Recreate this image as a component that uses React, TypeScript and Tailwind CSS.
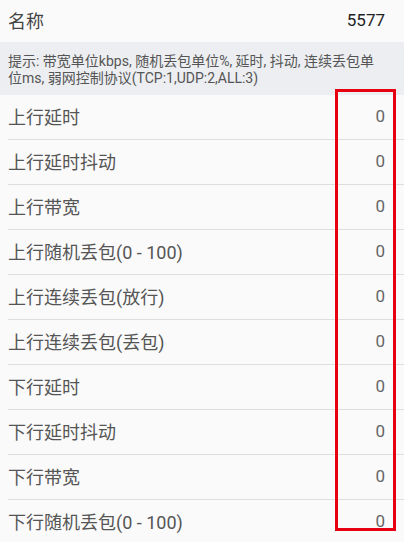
const rows: { label: string; value: string }[] = [
  { label: "上行延时", value: "0" },
  { label: "上行延时抖动", value: "0" },
  { label: "上行带宽", value: "0" },
  { label: "上行随机丢包(0 - 100)", value: "0" },
  { label: "上行连续丢包(放行)", value: "0" },
  { label: "上行连续丢包(丢包)", value: "0" },
  { label: "下行延时", value: "0" },
  { label: "下行延时抖动", value: "0" },
  { label: "下行带宽", value: "0" },
  { label: "下行随机丢包(0 - 100)", value: "0" },
];

const App = () => {
  return (
    <div
      className="relative w-[404px] h-[542px] overflow-hidden bg-[#fafafa]"
      style={{ fontFamily: 'Roboto, "Noto Sans CJK SC", sans-serif' }}
    >
      {/* Name header */}
      <div className="flex items-center justify-between h-[42px] pl-2 pr-[19px]">
        <span className="text-[18px] text-[#444]">名称</span>
        <span className="text-[17px] text-[#222]">5577</span>
      </div>

      {/* Hint */}
      <div className="bg-[#eceef1] h-[53px] pl-2 pr-[20px] pt-[11px] text-[14px] leading-[17px] text-[#555]">
        提示: 带宽单位kbps, 随机丢包单位%, 延时, 抖动, 连续丢包单位ms, 弱网控制协议(TCP:1,UDP:2,ALL:3)
      </div>

      {/* Parameter rows */}
      <div className="flex flex-col pl-2">
        {rows.map((row) => (
          <div
            key={row.label}
            className="flex items-center justify-between h-[45px] border-b border-[#dedede] pr-[19px]"
          >
            <span className="text-[18px] text-[#555]">{row.label}</span>
            <span className="text-[17px] text-[#666]">{row.value}</span>
          </div>
        ))}
      </div>

      {/* Annotation box */}
      <div className="absolute left-[335px] top-[89px] w-[61px] h-[442px] border-[3px] border-[#e60012]" />
    </div>
  );
};

export default App;
